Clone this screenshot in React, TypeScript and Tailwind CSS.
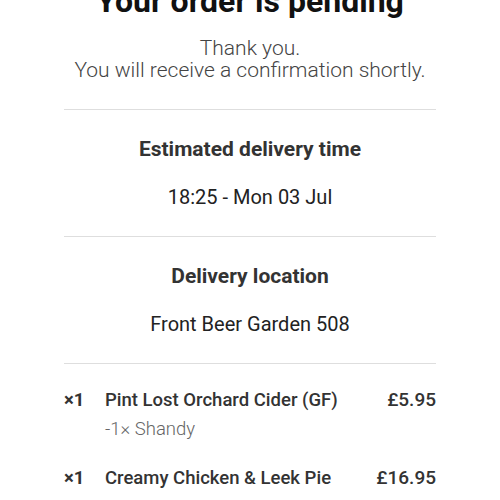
export default function App() {
  const items = [
    { qty: 1, name: "Pint Lost Orchard Cider (GF)", price: "£5.95", mods: ["-1× Shandy"] },
    { qty: 1, name: "Creamy Chicken & Leek Pie", price: "£16.95", mods: [] as string[] },
  ]

  return (
    <div className="w-[500px] h-[500px] overflow-hidden bg-white font-['Roboto',sans-serif]">
      <div className="px-16">
        {/* Header */}
        <h1 className="mt-[-18px] text-center text-[32px] leading-[38px] font-bold text-[#111]">
          Your order is pending
        </h1>
        <p className="mt-[18px] text-center text-[21px] leading-[21.5px] font-light text-[#444]">
          Thank you.
          <br />
          You will receive a confirmation shortly.
        </p>

        <div className="mt-[28px] h-px bg-[#dedede]" />

        {/* Estimated delivery time */}
        <div className="pt-[27px] pb-[27px] text-center">
          <h2 className="text-[21px] leading-[24px] font-bold text-[#333]">Estimated delivery time</h2>
          <p className="mt-6 text-[20px] leading-[24px] text-[#222]">18:25 - Mon 03 Jul</p>
        </div>

        <div className="h-px bg-[#dedede]" />

        {/* Delivery location */}
        <div className="pt-[27px] pb-[27px] text-center">
          <h2 className="text-[21px] leading-[24px] font-bold text-[#333]">Delivery location</h2>
          <p className="mt-6 text-[20px] leading-[24px] text-[#222]">Front Beer Garden 508</p>
        </div>

        <div className="h-px bg-[#dedede]" />

        {/* Items */}
        <div className="pt-6 flex flex-col gap-[25px]">
          {items.map((item) => (
            <div key={item.name} className="flex">
              <div className="w-[41px] text-[18.5px] leading-[24px] font-bold text-[#333]">×{item.qty}</div>
              <div className="flex-1">
                <div className="text-[18.5px] leading-[24px] font-medium text-[#333]">{item.name}</div>
                {item.mods.map((m) => (
                  <div key={m} className="mt-[5px] text-[18.5px] leading-[24px] font-light text-[#666]">
                    {m}
                  </div>
                ))}
              </div>
              <div className="text-[19px] leading-[24px] font-medium text-[#333]">{item.price}</div>
            </div>
          ))}
        </div>
      </div>
    </div>
  )
}
